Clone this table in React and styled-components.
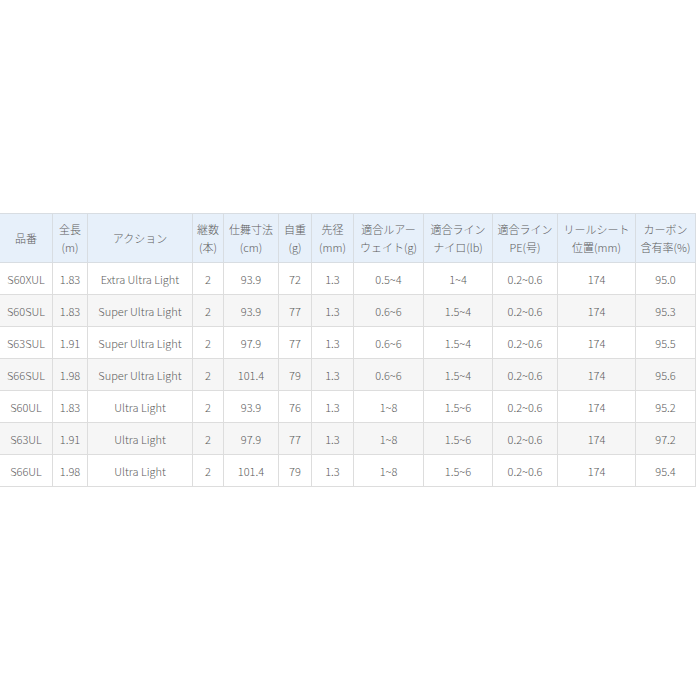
import styled, { createGlobalStyle } from 'styled-components'

const GlobalStyle = createGlobalStyle`
  html, body {
    margin: 0;
    padding: 0;
    background-color: #ffffff;
  }
`

const Page = styled.div`
  width: 700px;
  height: 700px;
  padding-top: 213px;
  box-sizing: border-box;
  font-family: 'Noto Sans CJK JP', 'Noto Sans', sans-serif;
`

const Table = styled.table`
  width: 695px;
  table-layout: fixed;
  border-collapse: collapse;
  font-size: 11px;
  font-weight: 300;
  color: #5c5c5c;
  margin-left: -1px;
`

const HeadCell = styled.th`
  height: 48px;
  padding: 0;
  font-weight: 300;
  line-height: 18px;
  text-align: center;
  background-color: #e7f0fa;
  border: 1px solid #d8dde2;
`

const Row = styled.tr`
  background-color: ${(p) => (p.$shaded ? '#f6f6f6' : '#ffffff')};
`

const Cell = styled.td`
  height: 31px;
  padding: 0;
  text-align: center;
  white-space: nowrap;
  border: 1px solid #dddddd;
`

const widths = [53, 35, 105, 31, 55, 33, 42, 70, 69, 65, 78, 60]

const headers = [
  ['品番'],
  ['全長', '(m)'],
  ['アクション'],
  ['継数', '(本)'],
  ['仕舞寸法', '(cm)'],
  ['自重', '(g)'],
  ['先径', '(mm)'],
  ['適合ルアー', 'ウェイト(g)'],
  ['適合ライン', 'ナイロ(lb)'],
  ['適合ライン', 'PE(号)'],
  ['リールシート', '位置(mm)'],
  ['カーボン', '含有率(%)'],
]

const rows = [
  ['S60XUL', '1.83', 'Extra Ultra Light', '2', '93.9', '72', '1.3', '0.5~4', '1~4', '0.2~0.6', '174', '95.0'],
  ['S60SUL', '1.83', 'Super Ultra Light', '2', '93.9', '77', '1.3', '0.6~6', '1.5~4', '0.2~0.6', '174', '95.3'],
  ['S63SUL', '1.91', 'Super Ultra Light', '2', '97.9', '77', '1.3', '0.6~6', '1.5~4', '0.2~0.6', '174', '95.5'],
  ['S66SUL', '1.98', 'Super Ultra Light', '2', '101.4', '79', '1.3', '0.6~6', '1.5~4', '0.2~0.6', '174', '95.6'],
  ['S60UL', '1.83', 'Ultra Light', '2', '93.9', '76', '1.3', '1~8', '1.5~6', '0.2~0.6', '174', '95.2'],
  ['S63UL', '1.91', 'Ultra Light', '2', '97.9', '77', '1.3', '1~8', '1.5~6', '0.2~0.6', '174', '97.2'],
  ['S66UL', '1.98', 'Ultra Light', '2', '101.4', '79', '1.3', '1~8', '1.5~6', '0.2~0.6', '174', '95.4'],
]

const App = () => {
  return (
    <>
      <GlobalStyle />
      <Page>
        <Table>
          <colgroup>
            {widths.map((w, i) => (
              <col key={i} style={{ width: w }} />
            ))}
          </colgroup>
          <thead>
            <tr>
              {headers.map((lines, i) => (
                <HeadCell key={i}>
                  {lines.map((l, j) => (
                    <div key={j}>{l}</div>
                  ))}
                </HeadCell>
              ))}
            </tr>
          </thead>
          <tbody>
            {rows.map((r, i) => (
              <Row key={i} $shaded={i % 2 === 1}>
                {r.map((v, j) => (
                  <Cell key={j}>{v}</Cell>
                ))}
              </Row>
            ))}
          </tbody>
        </Table>
      </Page>
    </>
  )
}

export default App
